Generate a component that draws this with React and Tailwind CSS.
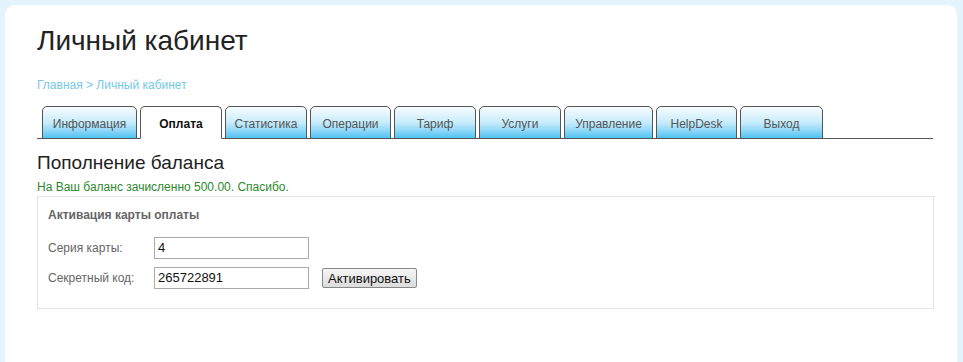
import React from 'react';

const TABS = [
  { label: 'Информация', w: 'w-[95px]' },
  { label: 'Оплата', w: 'w-[82px]', active: true },
  { label: 'Статистика', w: 'w-[82px]' },
  { label: 'Операции', w: 'w-[81px]' },
  { label: 'Тариф', w: 'w-[82px]' },
  { label: 'Услуги', w: 'w-[82px]' },
  { label: 'Управление', w: 'w-[89px]' },
  { label: 'HelpDesk', w: 'w-[81px]' },
  { label: 'Выход', w: 'w-[83px]' },
];

const App = () => {
  return (
    <div className="min-h-[362px] h-[362px] overflow-hidden bg-[#e3f4fc] pl-[5px] pr-[6px] pt-[5px] font-['Liberation_Sans',Arial,sans-serif]">
      <div className="h-[420px] bg-white rounded-tl-[10px] rounded-tr-[10px] pl-[32px] pr-[20px] pt-[20px]">
        <h1 className="text-[28px] leading-[32px] text-[#222]">Личный кабинет</h1>
        <div className="mt-[21px] text-[12px] leading-[14px] text-[#75c8e6]">Главная &gt; Личный кабинет</div>

        {/* Tabs */}
        <div className="mt-[14px] w-[896px] border-b border-[#555] flex gap-[3px] pl-[5px] h-[33px] items-end">
          {TABS.map(t => (
            <div
              key={t.label}
              className={`${t.w} h-[33px] -mb-px rounded-t-[5px] border border-[#555] flex items-center justify-center pt-[2px] text-[12px] ${t.active ? 'bg-white border-b-white font-bold text-[#111]' : 'bg-gradient-to-b from-[#f8fcfe] via-[#c7ecfb] to-[#4cc3f3] border-b-[#555] text-[#555]'}`}
            >
              {t.label}
            </div>
          ))}
        </div>

        <h2 className="mt-[12px] text-[19px] leading-[24px] text-[#222]">Пополнение баланса</h2>
        <div className="mt-[5px] text-[12px] leading-[14px] text-[#2c8a2c]">На Ваш баланс зачисленно 500.00. Спасибо.</div>

        <div className="mt-[2px] w-[897px] h-[113px] border border-[#e3e3e3] pl-[10px] pt-[11px]">
          <div className="text-[12px] leading-[14px] font-bold text-[#666]">Активация карты оплаты</div>
          <div className="mt-[15px] flex items-center">
            <span className="w-[106px] text-[12px] text-[#666]">Серия карты:</span>
            <div className="w-[155px] h-[22px] border border-[#aaa] px-[3px] flex items-center text-[13px] text-[#111]">4</div>
          </div>
          <div className="mt-[8px] flex items-center">
            <span className="w-[106px] text-[12px] text-[#666]">Секретный код:</span>
            <div className="w-[155px] h-[22px] border border-[#aaa] px-[3px] flex items-center text-[13px] text-[#111]">265722891</div>
            <button className="ml-[13px] h-[20px] px-[5px] border border-[#888] rounded-[2px] bg-gradient-to-b from-[#f6f6f6] to-[#dcdcdc] text-[13px] text-[#111] leading-none">Активировать</button>
          </div>
        </div>
      </div>
    </div>
  );
};

export default App;
